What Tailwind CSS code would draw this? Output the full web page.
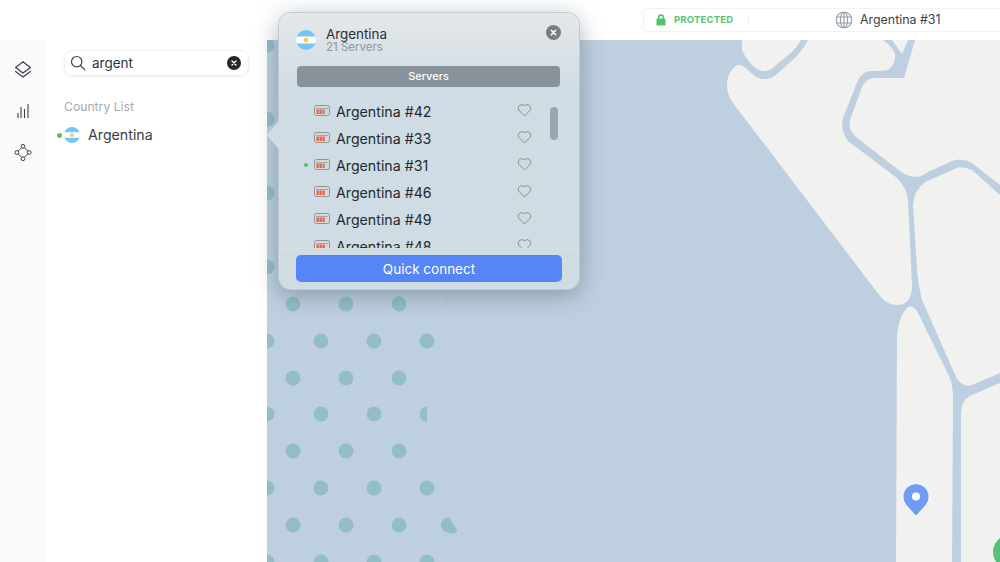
<!DOCTYPE html>
<html lang="en">
<head>
  <meta charset="UTF-8">
  <meta name="viewport" content="width=device-width, initial-scale=1.0">
  <title>Argentina servers</title>
  <script src="https://cdn.jsdelivr.net/npm/@tailwindcss/browser@4"></script>
</head>
<body class="bg-white font-['Inter',sans-serif] overflow-hidden">
  <div class="relative w-[1000px] h-[562px] flex flex-col overflow-hidden">

    <!-- Top bar -->
    <header class="h-10 shrink-0 bg-white flex justify-end items-center">
      <div class="w-[357px] h-6 flex items-center border border-r-0 border-[#f1f1f1] rounded-l-[4px] pl-[12px]">
        <svg class="w-[10px] h-3" viewBox="0 0 10 12"><path d="M2.6 5V3.4a2.4 2.4 0 0 1 4.8 0V5" fill="none" stroke="#4fc26d" stroke-width="1.5"/><rect x="0.5" y="4.6" width="9" height="7" rx="1.2" fill="#4fc26d"/></svg>
        <span class="ml-[8px] w-[59px] text-[9.5px] font-bold tracking-[0.2px] whitespace-nowrap text-[#56c574]">PROTECTED</span>
        <span class="ml-[15px] w-px h-3 bg-[#efefef]"></span>
        <svg class="ml-[86px] w-[18px] h-[18px]" viewBox="0 0 18 18" fill="none" stroke="#929daa" stroke-width="1.1"><circle cx="9" cy="9" r="7.8"/><ellipse cx="9" cy="9" rx="3.6" ry="7.8"/><path d="M9 1.2v15.6M1.8 6h14.4M1.8 12h14.4"/></svg>
        <span class="ml-[7px] text-[12.400px] text-[#3c4148]">Argentina #31</span>
      </div>
    </header>

    <div class="flex flex-1 min-h-0">
      <!-- Icon rail -->
      <nav class="w-[46px] shrink-0 bg-[#fafafa] flex flex-col items-center pt-[20px] gap-[24px]">
        <svg class="w-[18px] h-[18px]" viewBox="14 60 18 18" fill="none" stroke="#3a4149" stroke-width="1.2" stroke-linejoin="round" stroke-linecap="round"><path d="M23 61.8l7.4 5.6-7.4 5.6-7.4-5.6z"/><path d="M15.6 71.4l7.4 5.6 7.4-5.6"/></svg>
        <svg class="w-[18px] h-[18px]" viewBox="14 102 18 18" fill="none" stroke="#3a4149" stroke-width="1.1"><path d="M18 118v-5M21 118v-11M24.500 118v-9M28 118v-14"/></svg>
        <svg class="w-[18px] h-[18px]" viewBox="14 144 18 18" fill="none" stroke="#3a4149" stroke-width="1"><circle cx="23" cy="146.300" r="1.900"/><circle cx="16.800" cy="152.500" r="1.900"/><circle cx="29.200" cy="152.500" r="1.900"/><circle cx="23" cy="158.700" r="1.900"/><path d="M21.600 147.700l-3.400 3.400M24.400 147.700l3.400 3.400M18.200 153.900l3.400 3.400M27.800 153.900l-3.400 3.400"/></svg>
      </nav>

      <!-- Country panel -->
      <aside class="w-[221px] shrink-0 bg-white pl-[18px] pt-[10px]">
        <div class="w-[185px] h-[26px] flex items-center rounded-[8px] border border-[#f0f0f0] shadow-[0_1px_2px_rgba(0,0,0,0.08)] pl-[5px] pr-[7px]">
          <svg class="w-4 h-4" viewBox="0 0 16 16" fill="none" stroke="#3a4149" stroke-width="1.2" stroke-linecap="round"><circle cx="6.700" cy="6.700" r="5.200"/><path d="M10.500 10.500l4.300 4.300"/></svg>
          <span class="ml-[6px] text-[13.500px] text-[#2f343a]">argent</span>
          <svg class="ml-auto w-[14px] h-[14px]" viewBox="0 0 14 14"><circle cx="7" cy="7" r="7" fill="#23272e"/><path d="M5 5l4 4M9 5l-4 4" stroke="#fff" stroke-width="1.4" stroke-linecap="round"/></svg>
        </div>
        <div class="mt-[23px] text-[12.200px] leading-4 text-[#a4aab1]">Country List</div>
        <div class="mt-[10px] -ml-[7px] h-5 flex items-center">
          <span class="w-[5px] h-[5px] rounded-full bg-[#4fc26d]"></span>
          <svg class="ml-[2px] w-4 h-4" viewBox="0 0 20 20"><clipPath id="flagA"><circle cx="10" cy="10" r="10"/></clipPath><g clip-path="url(#flagA)"><rect width="20" height="20" fill="#74c6f6"/><rect y="6.500" width="20" height="7" fill="#fff"/><circle cx="10" cy="10" r="2.500" fill="#f5cf5a"/></g></svg>
          <span class="ml-[8px] text-[14.200px] text-[#3b4047]">Argentina</span>
        </div>
      </aside>

      <!-- Map -->
      <main class="relative flex-1 bg-[#bed0df] overflow-hidden">
        <svg class="absolute inset-0 w-[733px] h-[522px]" viewBox="267 40 733 522">
          <g fill="#93bec6">
            <circle cx="267" cy="45" r="7.500"/><circle cx="267" cy="119" r="7.500"/><circle cx="267" cy="193" r="7.500"/><circle cx="267" cy="267" r="7.500"/>
            <circle cx="293" cy="304" r="7.500"/><circle cx="346" cy="304" r="7.500"/><circle cx="399" cy="304" r="7.500"/>
            <circle cx="267" cy="341" r="7.500"/><circle cx="321" cy="341" r="7.500"/><circle cx="374" cy="341" r="7.500"/><circle cx="427" cy="341" r="7.500"/>
            <circle cx="293" cy="378" r="7.500"/><circle cx="346" cy="378" r="7.500"/><circle cx="399" cy="378" r="7.500"/>
            <circle cx="267" cy="414" r="7.500"/><circle cx="321" cy="414" r="7.500"/><circle cx="374" cy="414" r="7.500"/>
            <path d="M427 406.500a7.500 7.500 0 0 0 0 15z"/>
            <circle cx="293" cy="451" r="7.500"/><circle cx="346" cy="451" r="7.500"/><circle cx="399" cy="451" r="7.500"/>
            <circle cx="267" cy="488" r="7.500"/><circle cx="321" cy="488" r="7.500"/><circle cx="374" cy="488" r="7.500"/><circle cx="427" cy="488" r="7.500"/>
            <circle cx="293" cy="525" r="7.500"/><circle cx="346" cy="525" r="7.500"/><circle cx="399" cy="525" r="7.500"/>
            <path d="M449 517.500a7.500 7.500 0 0 0 -1 15a7.500 7.500 0 0 0 9.500 -1.500z"/>
            <circle cx="267" cy="562" r="7.500"/><circle cx="321" cy="562" r="7.500"/><circle cx="374" cy="562" r="7.500"/><circle cx="427" cy="562" r="7.500"/>
            <rect x="445.500" y="300" width="1" height="7" opacity="0.6"/>
          </g>
          <g fill="#f1f1f0">
            <path d="M727 85Q727 72 737 65Q743 64 750 72Q757 79 765 79Q772 79 777 74L797 56Q804 48 808 40L883 40Q892 46 895 54Q896 64 888 70Q884 71 870 71Q862 72 858 80L843 118Q840 130 848 141L897 178Q907 188 908 200L912 285Q912 305 897 305Q887 305 880 296L733 103Q727 95 727 85Z"/>
            <path d="M742 40L742 50Q744 56 752 65Q758 71 765 71Q770 71 775 66L792 52Q798 46 801 40Z"/>
            <path d="M892 40L902 54L908 40Z"/>
            <path d="M915 40L904 78L873 78Q866 79 862 87L850 120Q848 130 856 137L900 171Q908 177 918 177Q922 176 928 172L952 161Q962 157 972 163L1000 185L1000 40Z"/>
            <path d="M913 205Q914 190 925 182L957 168Q963 166 972 170L1000 195L1000 373L972 385Q964 388 957 379L922 300Q918 285 917 270Z"/>
            <path d="M896 562L897 335Q899 315 908 307Q913 305 917 311L950 378Q953 385 953 400L952 562Z"/>
            <path d="M961 562L961 412Q962 400 970 396L1000 383L1000 562Z"/>
          </g>
          <path d="M916 516L906 505A13 13 0 1 1 926 505Z" fill="#6f9bf5" stroke="#fff" stroke-opacity="0.7" stroke-width="1"/>
          <circle cx="916" cy="496.500" r="4" fill="#fff"/>
          <circle cx="1010" cy="552" r="17" fill="#58c178"/>
        </svg>
      </main>
    </div>

    <!-- Server popup -->
    <section class="absolute left-[279px] top-[13px] w-[300px] h-[276px] rounded-[12px] bg-linear-to-b from-[#e5e8ea] to-[#cfdce4] to-[28%] ring-1 ring-[#c4ccd1] shadow-[0_5px_24px_rgba(40,60,80,0.4)]">
      <svg class="absolute -left-[12px] top-[106px] w-[13px] h-8" viewBox="0 0 13 32"><path d="M13 0L0 16L13 32Z" fill="#cfdce4"/></svg>

      <div class="h-[53px] flex items-start pl-[17px] pr-[18px]">
        <svg class="mt-[17px] w-5 h-5 shrink-0" viewBox="0 0 20 20"><clipPath id="flagB"><circle cx="10" cy="10" r="10"/></clipPath><g clip-path="url(#flagB)"><rect width="20" height="20" fill="#74c6f6"/><rect y="6.500" width="20" height="7" fill="#fff"/><circle cx="10" cy="10" r="2.500" fill="#f5cf5a"/></g></svg>
        <div class="ml-[10px] mt-[14px]">
          <div class="text-[13.400px] leading-[14px] text-[#2b2f35]">Argentina</div>
          <div class="text-[11.500px] leading-[12px] text-[#8f979e]">21 Servers</div>
        </div>
        <svg class="ml-auto mt-[12px] w-[15px] h-[15px]" viewBox="0 0 15 15"><circle cx="7.500" cy="7.500" r="7.500" fill="#797d81"/><path d="M5.300 5.300l4.400 4.400M9.700 5.300l-4.400 4.400" stroke="#fff" stroke-width="1.500" stroke-linecap="round"/></svg>
      </div>

      <div class="ml-[18px] w-[263px] h-[21px] rounded-[4px] bg-[#87929a] flex items-center justify-center text-[11px] font-medium text-white">Servers</div>

      <div class="relative h-[161px] overflow-hidden pt-[11px]">
        <div class="h-[27px] w-[253px] flex items-center pl-[24px]">
          <span class="w-[11px]"></span>
          <svg class="-mt-[2px] w-4 h-[11px]" viewBox="0 0 16 11"><rect x="0.500" y="0.500" width="15" height="10" rx="2" fill="#d3d8dc" stroke="#8f9499"/><path d="M2 3.500h12" stroke="#8f9499" stroke-width="0.700"/><rect x="2.500" y="4.500" width="2.300" height="4.500" fill="#f0603c"/><rect x="5.500" y="4.500" width="2.300" height="4.500" fill="#f0603c"/><rect x="8.500" y="4.500" width="2.300" height="4.500" fill="#8f9499"/></svg>
          <span class="ml-[6px] text-[14.200px] text-[#25292e]">Argentina #42</span>
          <svg class="ml-auto -mt-[4px] w-[15px] h-[14px]" viewBox="0 0 15 14" fill="none" stroke="#8a8f93"><path d="M7.500 13L1.800 7.200A3.600 3.600 0 0 1 7 2.400l.5.600.5-.600a3.600 3.600 0 0 1 5.200 4.800z"/></svg>
        </div>
        <div class="h-[27px] w-[253px] flex items-center pl-[24px]">
          <span class="w-[11px]"></span>
          <svg class="-mt-[2px] w-4 h-[11px]" viewBox="0 0 16 11"><rect x="0.500" y="0.500" width="15" height="10" rx="2" fill="#d3d8dc" stroke="#8f9499"/><path d="M2 3.500h12" stroke="#8f9499" stroke-width="0.700"/><rect x="2.500" y="4.500" width="2.300" height="4.500" fill="#f0603c"/><rect x="5.500" y="4.500" width="2.300" height="4.500" fill="#f0603c"/><rect x="8.500" y="4.500" width="2.300" height="4.500" fill="#f0603c"/></svg>
          <span class="ml-[6px] text-[14.200px] text-[#25292e]">Argentina #33</span>
          <svg class="ml-auto -mt-[4px] w-[15px] h-[14px]" viewBox="0 0 15 14" fill="none" stroke="#8a8f93"><path d="M7.500 13L1.800 7.200A3.600 3.600 0 0 1 7 2.400l.5.600.5-.600a3.600 3.600 0 0 1 5.200 4.800z"/></svg>
        </div>
        <div class="h-[27px] w-[253px] flex items-center pl-[24px]">
          <span class="w-[11px] flex"><span class="-mt-[2px] ml-[1px] w-1 h-1 rounded-full bg-[#4fc26d]"></span></span>
          <svg class="-mt-[2px] w-4 h-[11px]" viewBox="0 0 16 11"><rect x="0.500" y="0.500" width="15" height="10" rx="2" fill="#d3d8dc" stroke="#8f9499"/><path d="M2 3.500h12" stroke="#8f9499" stroke-width="0.700"/><rect x="2.500" y="4.500" width="2.300" height="4.500" fill="#f0603c"/><rect x="5.500" y="4.500" width="2.300" height="4.500" fill="#f0603c"/><rect x="8.500" y="4.500" width="2.300" height="4.500" fill="#8f9499"/></svg>
          <span class="ml-[6px] text-[14.200px] text-[#25292e]">Argentina #31</span>
          <svg class="ml-auto -mt-[4px] w-[15px] h-[14px]" viewBox="0 0 15 14" fill="none" stroke="#8a8f93"><path d="M7.500 13L1.800 7.200A3.600 3.600 0 0 1 7 2.400l.5.600.5-.600a3.600 3.600 0 0 1 5.200 4.800z"/></svg>
        </div>
        <div class="h-[27px] w-[253px] flex items-center pl-[24px]">
          <span class="w-[11px]"></span>
          <svg class="-mt-[2px] w-4 h-[11px]" viewBox="0 0 16 11"><rect x="0.500" y="0.500" width="15" height="10" rx="2" fill="#d3d8dc" stroke="#8f9499"/><path d="M2 3.500h12" stroke="#8f9499" stroke-width="0.700"/><rect x="2.500" y="4.500" width="2.300" height="4.500" fill="#f0603c"/><rect x="5.500" y="4.500" width="2.300" height="4.500" fill="#f0603c"/><rect x="8.500" y="4.500" width="2.300" height="4.500" fill="#f0603c"/></svg>
          <span class="ml-[6px] text-[14.200px] text-[#25292e]">Argentina #46</span>
          <svg class="ml-auto -mt-[4px] w-[15px] h-[14px]" viewBox="0 0 15 14" fill="none" stroke="#8a8f93"><path d="M7.500 13L1.800 7.200A3.600 3.600 0 0 1 7 2.400l.5.600.5-.600a3.600 3.600 0 0 1 5.200 4.800z"/></svg>
        </div>
        <div class="h-[27px] w-[253px] flex items-center pl-[24px]">
          <span class="w-[11px]"></span>
          <svg class="-mt-[2px] w-4 h-[11px]" viewBox="0 0 16 11"><rect x="0.500" y="0.500" width="15" height="10" rx="2" fill="#d3d8dc" stroke="#8f9499"/><path d="M2 3.500h12" stroke="#8f9499" stroke-width="0.700"/><rect x="2.500" y="4.500" width="2.300" height="4.500" fill="#f0603c"/><rect x="5.500" y="4.500" width="2.300" height="4.500" fill="#f0603c"/><rect x="8.500" y="4.500" width="2.300" height="4.500" fill="#f0603c"/></svg>
          <span class="ml-[6px] text-[14.200px] text-[#25292e]">Argentina #49</span>
          <svg class="ml-auto -mt-[4px] w-[15px] h-[14px]" viewBox="0 0 15 14" fill="none" stroke="#8a8f93"><path d="M7.500 13L1.800 7.200A3.600 3.600 0 0 1 7 2.400l.5.600.5-.600a3.600 3.600 0 0 1 5.200 4.800z"/></svg>
        </div>
        <div class="h-[27px] w-[253px] flex items-center pl-[24px]">
          <span class="w-[11px]"></span>
          <svg class="-mt-[2px] w-4 h-[11px]" viewBox="0 0 16 11"><rect x="0.500" y="0.500" width="15" height="10" rx="2" fill="#d3d8dc" stroke="#8f9499"/><path d="M2 3.500h12" stroke="#8f9499" stroke-width="0.700"/><rect x="2.500" y="4.500" width="2.300" height="4.500" fill="#f0603c"/><rect x="5.500" y="4.500" width="2.300" height="4.500" fill="#f0603c"/><rect x="8.500" y="4.500" width="2.300" height="4.500" fill="#f0603c"/></svg>
          <span class="ml-[6px] text-[14.200px] text-[#25292e]">Argentina #48</span>
          <svg class="ml-auto -mt-[4px] w-[15px] h-[14px]" viewBox="0 0 15 14" fill="none" stroke="#8a8f93"><path d="M7.500 13L1.800 7.200A3.600 3.600 0 0 1 7 2.400l.5.600.5-.600a3.600 3.600 0 0 1 5.200 4.800z"/></svg>
        </div>
        <div class="absolute left-[271px] top-[20px] w-2 h-[33px] rounded-full bg-[#9aa5ad]"></div>
      </div>

      <div class="border-t border-[#dadfdf] pt-[6px] pl-[17px]">
        <button class="w-[266px] h-[27px] pt-[1px] rounded-[5px] bg-[#5585f6] text-[13.500px] text-white">Quick connect</button>
      </div>
    </section>
  </div>
</body>
</html>
